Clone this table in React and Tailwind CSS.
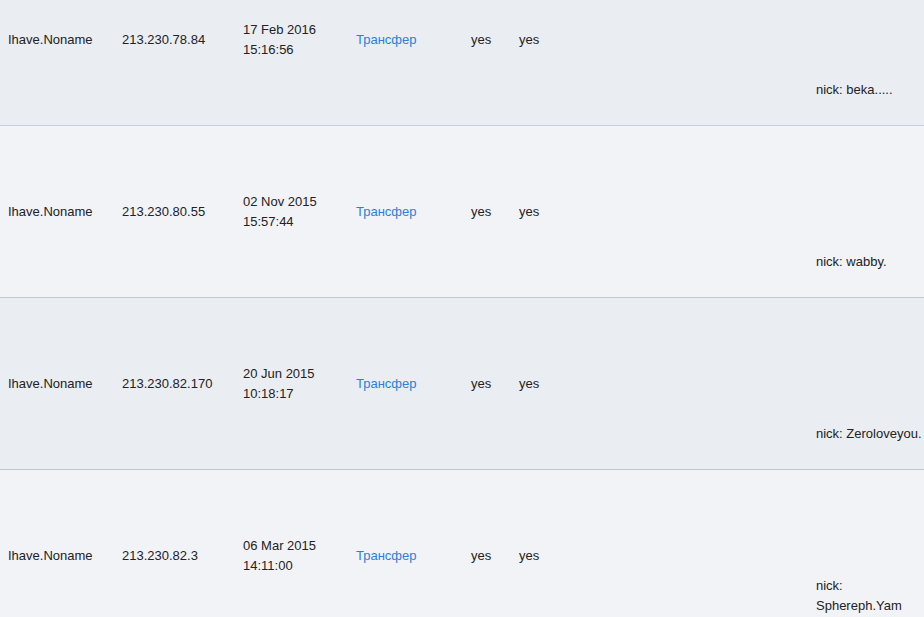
const rows = [
  { user: "Ihave.Noname", ip: "213.230.78.84", date: "17 Feb 2016", time: "15:16:56", note: ["nick: beka....."], bg: "bg-[#eaedf2]", border: "border-[#c6d0df]" },
  { user: "Ihave.Noname", ip: "213.230.80.55", date: "02 Nov 2015", time: "15:57:44", note: ["nick: wabby."], bg: "bg-[#f2f3f7]", border: "border-[#c3c7cd]" },
  { user: "Ihave.Noname", ip: "213.230.82.170", date: "20 Jun 2015", time: "10:18:17", note: ["nick: Zeroloveyou."], bg: "bg-[#eaedf2]", border: "border-[#c3c7cd]" },
  { user: "Ihave.Noname", ip: "213.230.82.3", date: "06 Mar 2015", time: "14:11:00", note: ["nick:", "Sphereph.Yam"], bg: "bg-[#f2f3f7]", border: "border-[#c3c7cd]" },
];

function Row({ row }) {
  return (
    <div className={`flex h-[172px] border-b ${row.bg} ${row.border}`}>
      <div className="w-[114px] shrink-0 pl-2 flex items-center">{row.user}</div>
      <div className="w-[121px] shrink-0 pl-2 flex items-center">{row.ip}</div>
      <div className="w-[113px] shrink-0 pl-2 flex flex-col justify-center">
        <span>{row.date}</span>
        <span>{row.time}</span>
      </div>
      <div className="w-[115px] shrink-0 pl-2 flex items-center">
        <a href="#" className="text-[#2f7de1]">Трансфер</a>
      </div>
      <div className="w-[48px] shrink-0 pl-2 flex items-center">yes</div>
      <div className="w-[297px] shrink-0 pl-2 flex items-center">yes</div>
      <div className="w-[126px] shrink-0 px-2 pb-[25px] flex flex-col justify-end">
        {row.note.map((t) => (
          <span key={t} className="whitespace-nowrap">{t}</span>
        ))}
      </div>
    </div>
  );
}

export default function App() {
  return (
    <div className="h-screen w-full overflow-hidden bg-[#f2f3f7] font-['Liberation_Sans',Arial,sans-serif] text-[13px] leading-5 text-[#222]">
      <div className="-mt-[46px] w-[934px]">
        {rows.map((r, i) => (
          <Row key={i} row={r} />
        ))}
      </div>
    </div>
  );
}
